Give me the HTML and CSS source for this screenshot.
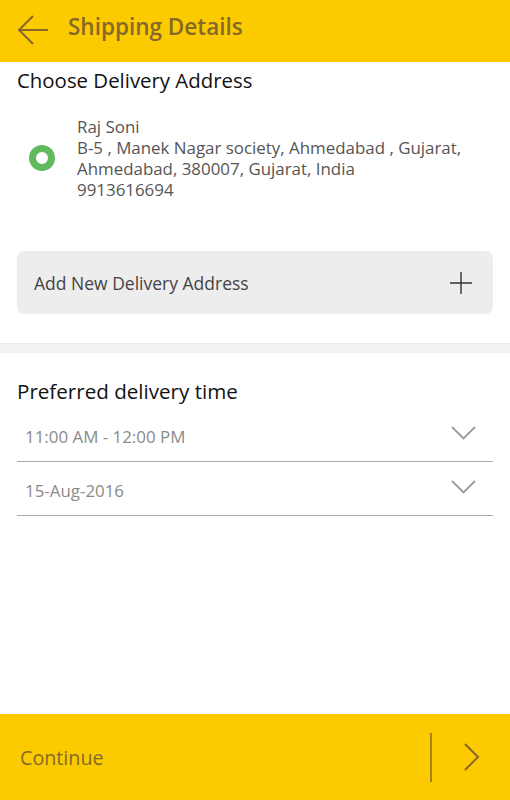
FILE: index.html
```html
<!DOCTYPE html>
<html lang="en">
<head>
    <meta charset="UTF-8">
    <meta name="viewport" content="width=device-width, initial-scale=1.0">
    <title>Shipping Details</title>
    <link rel="stylesheet" href="styles.css">
</head>
<body>
    <div class="app">
        <div class="topbar">
            <svg class="back" width="34" height="32" viewBox="0 0 34 32">
                <path d="M32 16H3M17 2L3 16l14 14" fill="none" stroke="#86692a" stroke-width="2"/>
            </svg>
            <h1>Shipping Details</h1>
        </div>

        <div class="content">
            <div class="section">
                <h2>Choose Delivery Address</h2>
                <div class="address">
                    <span class="radio"></span>
                    <div class="address-text">
                        <div>Raj Soni</div>
                        <div>B-5 , Manek Nagar society, Ahmedabad , Gujarat,<br>Ahmedabad, 380007, Gujarat, India</div>
                        <div>9913616694</div>
                    </div>
                </div>
                <div class="add-address">
                    <span>Add New Delivery Address</span>
                    <svg width="24" height="24" viewBox="0 0 24 24">
                        <path d="M12 1v22M1 12h22" stroke="#333" stroke-width="1.4"/>
                    </svg>
                </div>
            </div>

            <div class="divider"></div>

            <div class="section">
                <h2 class="time-title">Preferred delivery time</h2>
                <div class="select">
                    <span>11:00 AM - 12:00 PM</span>
                    <svg class="chev" width="25" height="14" viewBox="0 0 25 14">
                        <path d="M1 1l11.5 11.5L24 1" fill="none" stroke="#9a9a9a" stroke-width="1.8"/>
                    </svg>
                </div>
                <div class="select">
                    <span>15-Aug-2016</span>
                    <svg class="chev" width="25" height="14" viewBox="0 0 25 14">
                        <path d="M1 1l11.5 11.5L24 1" fill="none" stroke="#9a9a9a" stroke-width="1.8"/>
                    </svg>
                </div>
            </div>
        </div>

        <div class="footer">
            <span class="continue">Continue</span>
            <span class="sep"></span>
            <svg class="next" width="18" height="28" viewBox="0 0 18 28">
                <path d="M2 1l13 13L2 27" fill="none" stroke="#86692a" stroke-width="2"/>
            </svg>
        </div>
    </div>
</body>
</html>
```

FILE: styles.css
```css
body {
    margin: 0;
    font-family: "Open Sans", "Noto Sans", sans-serif;
    background: #fff;
}
.app {
    width: 510px;
    height: 800px;
    display: flex;
    flex-direction: column;
}
.topbar {
    height: 62px;
    background: #fbcb00;
    display: flex;
    align-items: center;
    padding: 0 0 4px 16px;
    box-sizing: border-box;
}
.back {
    margin-top: 2px;
}
.topbar h1 {
    margin: 0 0 4px 18px;
    font-size: 22.5px;
    font-weight: 600;
    line-height: 30px;
    color: #86692a;
}
.content {
    flex: 1;
}
.section {
    padding: 0 17px;
}
h2 {
    margin: 0;
    font-size: 20.4px;
    font-weight: 400;
    line-height: 28px;
    color: #111;
}
.section h2 {
    padding-top: 4px;
}
.address {
    display: flex;
    align-items: center;
    margin-top: 22px;
}
.radio {
    width: 12px;
    height: 12px;
    border: 7px solid #62ba5e;
    border-radius: 50%;
    margin-left: 12px;
    margin-right: 22px;
}
.address-text {
    font-size: 16.9px;
    line-height: 21px;
    color: #555;
}
.add-address {
    margin-top: 51px;
    height: 63px;
    background: #ededed;
    border-radius: 7px;
    display: flex;
    align-items: center;
    justify-content: space-between;
    padding: 0 20px 0 17px;
    font-size: 17.5px;
    color: #444;
}
.divider {
    margin-top: 29px;
    height: 9px;
    background: #f2f2f2;
    border-top: 1px solid #ebebeb;
}
.time-title {
    margin-top: 20px;
    font-size: 20.6px;
}
.select {
    display: flex;
    justify-content: space-between;
    padding: 21px 17px 13px 8px;
    line-height: 22px;
    font-size: 16.9px;
    color: #8a8a8a;
    border-bottom: 1px solid #aaa;
}
.select + .select {
    padding-top: 18px;
}
.chev {
    margin-top: 0;
}
.footer {
    height: 86px;
    background: #fbcb00;
    display: flex;
    align-items: center;
    padding-left: 20px;
}
.continue {
    flex: 1;
    font-size: 19.7px;
    color: #86692a;
}
.sep {
    width: 2px;
    height: 49px;
    background: #a3822a;
    margin-right: 31px;
}
.next {
    margin-right: 29px;
}
```
